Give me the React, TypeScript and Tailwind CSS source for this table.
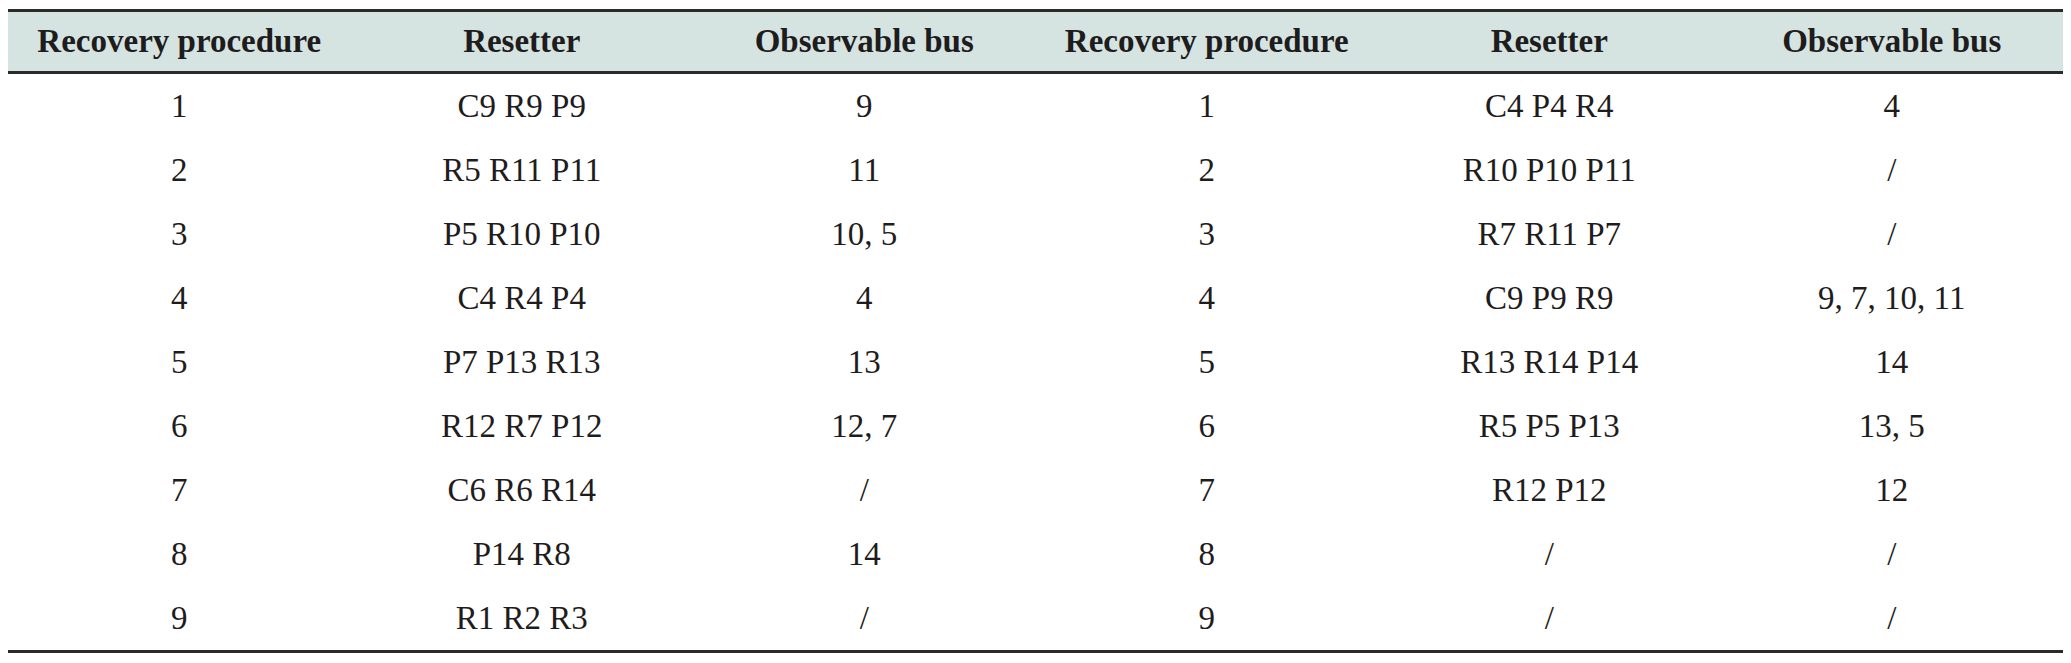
import React from "react";

const headers = [
  "Recovery procedure",
  "Resetter",
  "Observable bus",
  "Recovery procedure",
  "Resetter",
  "Observable bus",
];

const rows: string[][] = [
  ["1", "C9 R9 P9", "9", "1", "C4 P4 R4", "4"],
  ["2", "R5 R11 P11", "11", "2", "R10 P10 P11", "/"],
  ["3", "P5 R10 P10", "10, 5", "3", "R7 R11 P7", "/"],
  ["4", "C4 R4 P4", "4", "4", "C9 P9 R9", "9, 7, 10, 11"],
  ["5", "P7 P13 R13", "13", "5", "R13 R14 P14", "14"],
  ["6", "R12 R7 P12", "12, 7", "6", "R5 P5 P13", "13, 5"],
  ["7", "C6 R6 R14", "/", "7", "R12 P12", "12"],
  ["8", "P14 R8", "14", "8", "/", "/"],
  ["9", "R1 R2 R3", "/", "9", "/", "/"],
];

export default function App() {
  return (
    <div
      className="min-h-screen w-full bg-white pt-[9px] pl-[8px]"
      style={{ fontFamily: '"Liberation Serif", "Times New Roman", serif' }}
    >
      <div className="w-[2055px] text-[#1f1c1d]">
        <div className="grid grid-cols-6 h-[65px] items-center border-t-[3px] border-b-[3px] border-[#2a2a2a] bg-[#d5e4e1]">
          {headers.map((h, i) => (
            <div key={i} className="text-center text-[33px] font-bold leading-none">
              {h}
            </div>
          ))}
        </div>
        <div className="border-b-[3px] border-[#2a2a2a]">
          {rows.map((r, ri) => (
            <div key={ri} className="grid grid-cols-6 h-[64px] items-center">
              {r.map((c, ci) => (
                <div key={ci} className="text-center text-[33px] leading-none">
                  {c}
                </div>
              ))}
            </div>
          ))}
        </div>
      </div>
    </div>
  );
}
